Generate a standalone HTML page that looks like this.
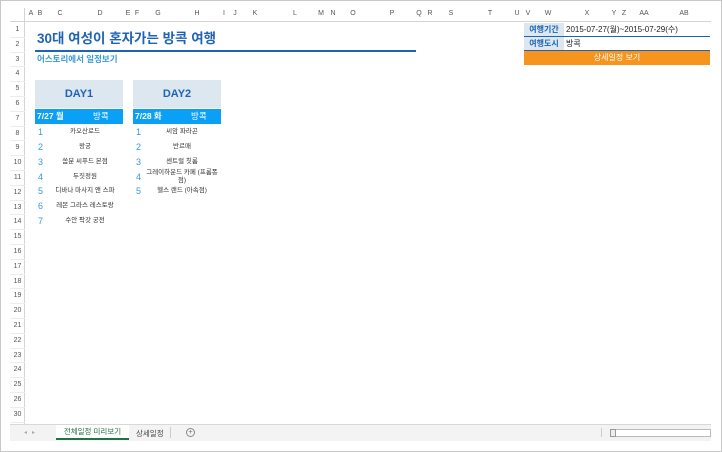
<!DOCTYPE html>
<html><head><meta charset="utf-8"><style>
*{margin:0;padding:0;box-sizing:border-box}
body{width:722px;height:452px;background:#fff;position:relative;overflow:hidden;font-family:"Liberation Sans","Noto Sans CJK KR",sans-serif;}
.a{position:absolute;white-space:nowrap}
.frame{position:absolute;left:0;top:0;width:722px;height:452px;border:1px solid #c8c8c8}
.colhdr{position:absolute;left:10px;top:8px;width:701px;height:14px;background:#fff;border-bottom:1px solid #d4d4d4}
.rowhdr{position:absolute;left:10px;top:8px;width:15px;height:416px;border-right:1px solid #d4d4d4}
.ch{position:absolute;top:10px;font-size:7px;color:#555;transform:translateX(-50%)}
.rh{position:absolute;left:10px;width:15px;text-align:center;font-size:7px;color:#555;border-bottom:1px solid #ececec;height:14.8px;line-height:14px}
.day{position:absolute;width:88px;height:28px;background:#dde7f0;color:#1e64b4;font-weight:bold;font-size:11px;text-align:center;line-height:28px}
.band{position:absolute;width:88px;height:15px;background:#0aa0f5;color:#fff;font-size:8.5px;font-weight:bold;line-height:15px}
.n{position:absolute;font-size:9px;color:#3a9ad9;line-height:12px}
.t{position:absolute;font-size:6.5px;color:#333;text-align:center;line-height:12px}
</style></head><body>
<div class="frame"></div>
<div class="colhdr"></div>
<div class="rowhdr"></div>
<div class="ch" style="left:31px">A</div><div class="ch" style="left:40px">B</div><div class="ch" style="left:60px">C</div><div class="ch" style="left:100px">D</div><div class="ch" style="left:128px">E</div><div class="ch" style="left:137px">F</div><div class="ch" style="left:158px">G</div><div class="ch" style="left:197px">H</div><div class="ch" style="left:224px">I</div><div class="ch" style="left:235px">J</div><div class="ch" style="left:255px">K</div><div class="ch" style="left:295px">L</div><div class="ch" style="left:321px">M</div><div class="ch" style="left:333px">N</div><div class="ch" style="left:353px">O</div><div class="ch" style="left:392px">P</div><div class="ch" style="left:419px">Q</div><div class="ch" style="left:430px">R</div><div class="ch" style="left:451px">S</div><div class="ch" style="left:490px">T</div><div class="ch" style="left:517px">U</div><div class="ch" style="left:528px">V</div><div class="ch" style="left:548px">W</div><div class="ch" style="left:587px">X</div><div class="ch" style="left:614px">Y</div><div class="ch" style="left:624px">Z</div><div class="ch" style="left:644px">AA</div><div class="ch" style="left:684px">AB</div>
<div class="rh" style="top:23px">1</div><div class="rh" style="top:37.8px">2</div><div class="rh" style="top:52.6px">3</div><div class="rh" style="top:67.4px">4</div><div class="rh" style="top:82.2px">5</div><div class="rh" style="top:97px">6</div><div class="rh" style="top:111.8px">7</div><div class="rh" style="top:126.6px">8</div><div class="rh" style="top:141.4px">9</div><div class="rh" style="top:156.2px">10</div><div class="rh" style="top:171px">11</div><div class="rh" style="top:185.8px">12</div><div class="rh" style="top:200.6px">13</div><div class="rh" style="top:215.4px">14</div><div class="rh" style="top:230.2px">15</div><div class="rh" style="top:245px">16</div><div class="rh" style="top:259.8px">17</div><div class="rh" style="top:274.6px">18</div><div class="rh" style="top:289.4px">19</div><div class="rh" style="top:304.2px">20</div><div class="rh" style="top:319px">21</div><div class="rh" style="top:333.8px">22</div><div class="rh" style="top:348.6px">23</div><div class="rh" style="top:363.4px">24</div><div class="rh" style="top:378.2px">25</div><div class="rh" style="top:393px">26</div><div class="rh" style="top:407.8px">30</div>

<div class="a" style="left:37px;top:27px;font-size:13.5px;font-weight:bold;color:#1e64b4">30대 여성이 혼자가는 방콕 여행</div>
<div class="a" style="left:35px;top:50px;width:381px;height:2px;background:#1e64b4"></div>
<div class="a" style="left:37px;top:53px;font-size:8.5px;font-weight:bold;color:#3a9ad9">어스토리에서 일정보기</div>

<div class="day" style="left:35px;top:80px">DAY1</div>
<div class="band" style="left:35px;top:109px"><span style="margin-left:2px">7/27 월</span><span style="position:absolute;left:58px;font-weight:normal">방콕</span></div>
<div class="day" style="left:133px;top:80px">DAY2</div>
<div class="band" style="left:133px;top:109px"><span style="margin-left:2px">7/28 화</span><span style="position:absolute;left:58px;font-weight:normal">방콕</span></div>

<div class="n" style="left:38px;top:126px">1</div><div class="t" style="left:50px;width:70px;top:126px">카오산로드</div>
<div class="n" style="left:38px;top:141px">2</div><div class="t" style="left:50px;width:70px;top:141px">왕궁</div>
<div class="n" style="left:38px;top:156px">3</div><div class="t" style="left:50px;width:70px;top:156px">쏨분 씨푸드 본점</div>
<div class="n" style="left:38px;top:171px">4</div><div class="t" style="left:50px;width:70px;top:171px">두짓정원</div>
<div class="n" style="left:38px;top:185px">5</div><div class="t" style="left:50px;width:70px;top:185px">디바나 마사지 앤 스파</div>
<div class="n" style="left:38px;top:200px">6</div><div class="t" style="left:50px;width:70px;top:200px">레몬 그라스 레스토랑</div>
<div class="n" style="left:38px;top:215px">7</div><div class="t" style="left:50px;width:70px;top:215px">수안 팍갓 궁전</div>

<div class="n" style="left:136px;top:126px">1</div><div class="t" style="left:143px;width:78px;top:126px">씨암 파라곤</div>
<div class="n" style="left:136px;top:141px">2</div><div class="t" style="left:143px;width:78px;top:141px">반르매</div>
<div class="n" style="left:136px;top:156px">3</div><div class="t" style="left:143px;width:78px;top:156px">센트럴 칫롬</div>
<div class="n" style="left:136px;top:171px">4</div><div class="t" style="left:143px;width:78px;top:169px;line-height:8px;white-space:normal">그레이하운드 카페 (프롬퐁점)</div>
<div class="n" style="left:136px;top:185px">5</div><div class="t" style="left:143px;width:78px;top:185px">헬스 랜드 (아속점)</div>

<div class="a" style="left:524px;top:23px;width:40px;height:13px;background:#dde7f0;color:#1e64b4;font-size:8px;font-weight:bold;text-align:center;line-height:13px">여행기간</div>
<div class="a" style="left:566px;top:24px;font-size:8px;color:#222">2015-07-27(월)~2015-07-29(수)</div>
<div class="a" style="left:524px;top:36px;width:186px;height:1px;background:#1e64b4"></div>
<div class="a" style="left:524px;top:37px;width:40px;height:13px;background:#dde7f0;color:#1e64b4;font-size:8px;font-weight:bold;text-align:center;line-height:13px">여행도시</div>
<div class="a" style="left:566px;top:38px;font-size:8px;color:#222">방콕</div>
<div class="a" style="left:524px;top:50px;width:186px;height:1px;background:#1e64b4"></div>
<div class="a" style="left:524px;top:51px;width:186px;height:14px;background:#f7941d;color:#fff;font-size:8px;text-align:center;line-height:14px">상세일정 보기</div>

<div class="a" style="left:10px;top:424px;width:701px;height:1.5px;background:#d8d8d8"></div>
<div class="a" style="left:10px;top:425px;width:701px;height:16px;background:#f3f3f3"></div>
<div class="a" style="left:24px;top:429px;font-size:6px;color:#aaa">◂&nbsp;&nbsp;&nbsp;▸</div>
<div class="a" style="left:56px;top:425px;width:73px;height:15px;background:#fff;border-bottom:2px solid #217346;font-size:7.5px;color:#217346;text-align:center;line-height:14px">전체일정 미리보기</div>
<div class="a" style="left:136px;top:428px;font-size:7.5px;color:#444">상세일정</div>
<div class="a" style="left:170px;top:427px;width:1px;height:11px;background:#ccc"></div>
<div class="a" style="left:186px;top:428px;width:9px;height:9px;border:1px solid #888;border-radius:50%;font-size:7px;line-height:7px;text-align:center;color:#666">+</div>
<div class="a" style="left:601px;top:428px;width:1px;height:9px;background:#ccc"></div>
<div class="a" style="left:610px;top:429px;width:101px;height:8px;background:#fff;border:1px solid #bbb"></div>
<div class="a" style="left:610px;top:429px;width:6px;height:8px;border:1px solid #999;background:#eee"></div>
</body></html>
